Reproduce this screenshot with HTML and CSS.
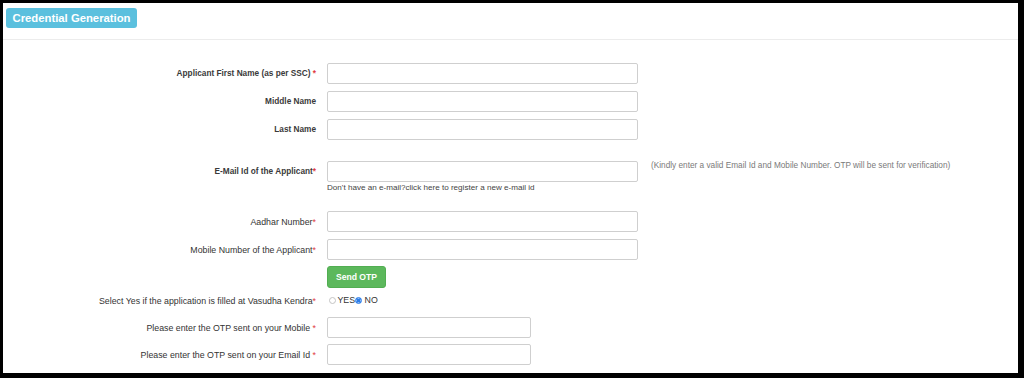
FILE: index.html
```html
<!DOCTYPE html>
<html lang="en">
<head>
<meta charset="utf-8">
<title>Credential Generation</title>
<link rel="stylesheet" href="styles.css">
</head>
<body>
<div class="panel">
  <div class="panel-head"><span class="badge">Credential Generation</span></div>
  <form class="form">
    <div class="row">
      <label class="lbl bold">Applicant First Name (as per SSC) <span class="req">*</span></label>
      <input class="inp" type="text">
    </div>
    <div class="row">
      <label class="lbl bold">Middle Name</label>
      <input class="inp" type="text">
    </div>
    <div class="row gap-lg">
      <label class="lbl bold">Last Name</label>
      <input class="inp" type="text">
    </div>
    <div class="row top gap-email">
      <label class="lbl bold tall">E-Mail Id of the Applicant<span class="req">*</span></label>
      <div class="ctrl">
        <input class="inp" type="text">
        <div class="hint">Don't have an e-mail?click here to register a new e-mail id</div>
      </div>
      <div class="note">(Kindly enter a valid Email Id and Mobile Number. OTP will be sent for verification)</div>
    </div>
    <div class="row">
      <label class="lbl">Aadhar Number<span class="req">*</span></label>
      <input class="inp" type="text">
    </div>
    <div class="row gap-sm">
      <label class="lbl">Mobile Number of the Applicant<span class="req">*</span></label>
      <input class="inp" type="text">
    </div>
    <div class="row gap-sm">
      <span class="lbl"></span>
      <button class="btn" type="button">Send OTP</button>
    </div>
    <div class="row radio-row">
      <label class="lbl">Select Yes if the application is filled at Vasudha Kendra<span class="req">*</span></label>
      <div class="radios">
        <input class="rad" type="radio" name="vk"><span class="rtxt">YES</span><input class="rad" type="radio" name="vk" checked><span class="rtxt no">NO</span>
      </div>
    </div>
    <div class="row gap-sm">
      <label class="lbl">Please enter the OTP sent on your Mobile <span class="req">*</span></label>
      <input class="inp short" type="text">
    </div>
    <div class="row">
      <label class="lbl">Please enter the OTP sent on your Email Id <span class="req">*</span></label>
      <input class="inp short" type="text">
    </div>
  </form>
</div>
</body>
</html>
```

FILE: styles.css
```css
html, body {
  margin: 0;
  background: #000;
}
body {
  padding: 3px 6px 5px 3px;
  font-family: "Liberation Sans", Arial, sans-serif;
  color: #333;
}
.panel {
  width: 1015px;
  height: 370px;
  background: #fff;
  overflow: hidden;
}
.panel-head {
  display: flex;
  padding: 5px 0 11px 3px;
  border-bottom: 1px solid #ececec;
}
.badge {
  display: block;
  height: 20px;
  line-height: 20px;
  padding: 0 6.5px;
  background: #5bc0de;
  color: #fff;
  font-weight: bold;
  font-size: 11.3px;
  border-radius: 3px;
}
.form {
  margin: 0;
  padding-top: 23px;
}
.row {
  display: flex;
  align-items: center;
  margin-bottom: 7px;
}
.row.top { align-items: flex-start; }
.row.gap-lg { margin-bottom: 21px; }
.row.gap-email { margin-bottom: 18px; }
.row.gap-sm { margin-bottom: 6px; }
.row.radio-row { height: 13px; margin-bottom: 10px; }
.lbl {
  flex: 0 0 324px;
  box-sizing: border-box;
  padding-right: 11px;
  text-align: right;
  font-size: 8.8px;
  line-height: 10px;
  color: #333;
}
.lbl.bold {
  font-weight: bold;
  font-size: 8.25px;
  color: #3a3a3a;
}
.lbl.tall { line-height: 21px; }
.req { color: #e0393e; }
.inp {
  display: block;
  width: 311px;
  height: 21px;
  box-sizing: border-box;
  margin: 0;
  padding: 0 6px;
  border: 1px solid #cfcfcf;
  border-radius: 2px;
  background: #fff;
  font: 9px "Liberation Sans", Arial, sans-serif;
}
.inp.short { width: 204px; }
.hint {
  margin-top: 1px;
  font-size: 8.1px;
  line-height: 10px;
  color: #444;
}
.note {
  margin-left: 13px;
  margin-top: 0;
  font-size: 8.25px;
  line-height: 9px;
  color: #7a7a7a;
}
.btn {
  width: 59px;
  height: 22px;
  margin: 0;
  padding: 0;
  background: #5cb85c;
  border: 1px solid #52ae52;
  border-radius: 3px;
  color: #fff;
  font: bold 8.6px "Liberation Sans", Arial, sans-serif;
}
.radios {
  display: flex;
  align-items: center;
  font-size: 8.8px;
  color: #333;
}
.rad {
  appearance: none;
  -webkit-appearance: none;
  width: 7px;
  height: 7px;
  margin: 0 1.5px 0 2px;
  box-sizing: border-box;
  border: 1px solid #c4c4c4;
  border-radius: 50%;
  background: #fff;
}
.rad:checked {
  border-color: #2b7de9;
  background: radial-gradient(circle, #2b7de9 0 1.6px, #8fbaf3 2px, #2b7de9 2.6px);
  margin: 0 2.5px 0 0;
}
.rtxt { line-height: 13px; }
```
